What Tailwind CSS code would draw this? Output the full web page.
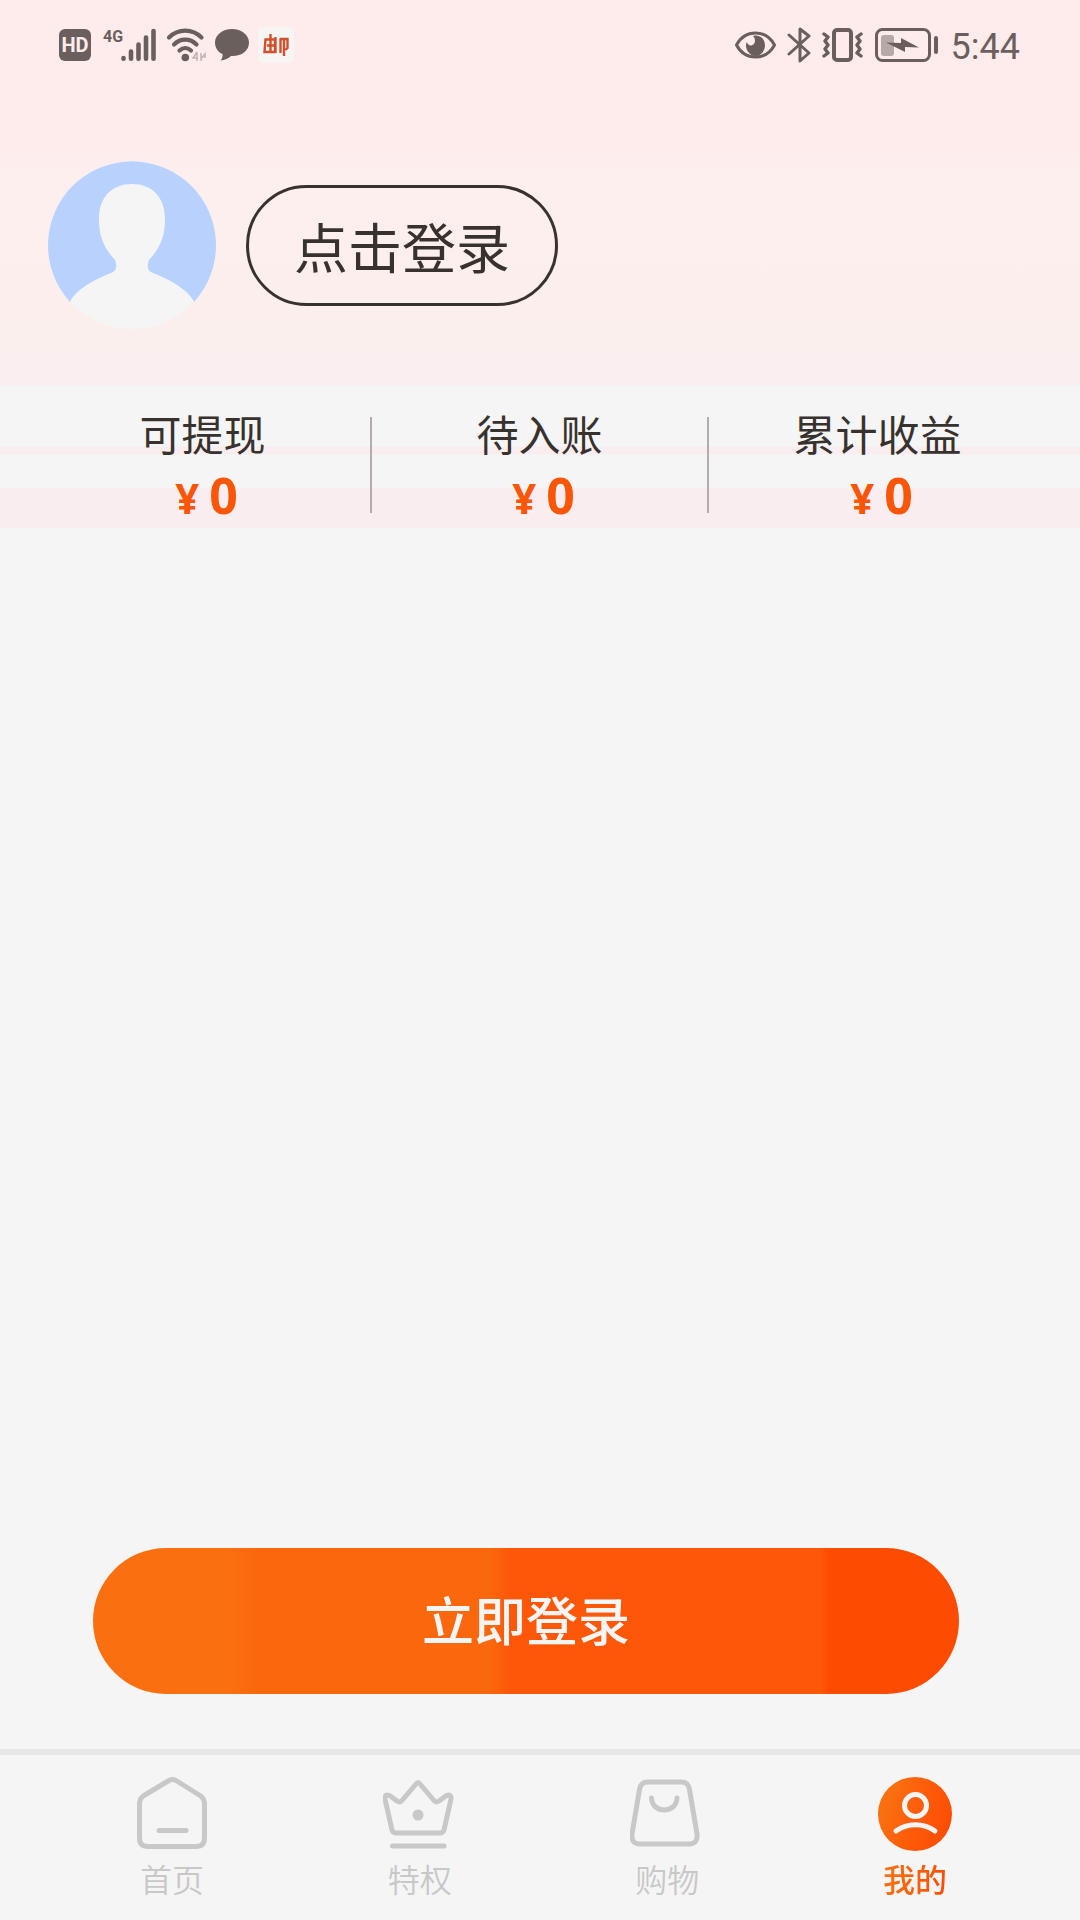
<!DOCTYPE html>
<html lang="zh-CN">
  <head>
    <meta charset="UTF-8" />
    <meta name="viewport" content="width=device-width, initial-scale=1.0" />
    <title>我的</title>
    <script src="https://cdn.jsdelivr.net/npm/@tailwindcss/browser@4"></script>
  </head>

  <body class="min-h-screen flex flex-col bg-[#f5f5f5] text-[#38322e] font-['Noto_Sans_CJK_SC',sans-serif]">
    <!-- 顶部：渐变背景 -->
    <div class="h-[528px] bg-[linear-gradient(to_bottom,#feecec_0px,#feecec_145px,#fcefed_175px,#fbefed_352px,#faeef0_354px,#faeef0_385px,#f5f5f5_386px,#f5f5f5_446px,#faedef_447px,#faedef_454px,#f5f5f5_455px,#f5f5f5_488px,#faedef_489px,#faedef_527px,#f5f5f5_528px)]">
      <!-- 状态栏 -->
      <div class="flex items-center justify-between h-[90px] pl-[59px] pr-[60px] text-[#6b5f5e]">
        <div class="flex items-center">
          <span class="w-8 h-8 rounded-md bg-[#6b5f5e] text-[#feecec] font-['Roboto',sans-serif] text-[20px] leading-8 font-bold text-center">HD</span>
          <span class="ml-3 mb-4 w-[18px] font-['Roboto',sans-serif] text-[16px] leading-4 font-bold">4G</span>
          <svg class="w-9 h-[34px]" viewBox="0 0 36 34" fill="none" stroke="currentColor" stroke-width="4.6" stroke-linecap="round">
            <path d="M2.5 30v.8M10 23.500v7.300M17.500 16.500v14.300M25 9.500v21.300M32.500 3v27.800" />
          </svg>
          <svg class="ml-[9px] w-10 h-[34px]" viewBox="0 0 40 34" fill="none">
            <g stroke="currentColor" stroke-width="4.200" stroke-linecap="round">
              <path d="M3 9.500C12 .3 26.500 .3 35.500 9.500" />
              <path d="M8 16.500C14.500 10 24 10 30.500 16.500" />
              <path d="M13.500 22.500C17 19.300 21.500 19.300 25 22.500" />
            </g>
            <circle cx="19.300" cy="29.500" r="3.800" fill="currentColor" />
            <path d="M31 24v9M31 24l-4 6h5M35 25v8M35 31l4-5v4" stroke="#c2b5b4" stroke-width="1.500" />
          </svg>
          <svg class="ml-[9px] w-[34px] h-[34px]" viewBox="0 0 34 34" fill="currentColor">
            <path d="M17 1C7.500 1 0 7 0 14.500c0 5.500 3 9.500 7.500 11.500.3 2.500-.5 5-2 6.500 4.500-.3 8-2 10.500-4.500C26.500 28.500 34 23 34 14.500 34 7 26.500 1 17 1z" />
          </svg>
          <svg class="ml-[9px] w-9 h-9" viewBox="0 0 36 36" fill="none">
            <rect width="36" height="36" rx="5" fill="#f6f5f4" />
            <path d="M7.500 12.500h9.500v12.500H6.500zM12.500 7v18M9 18.500h7M17.500 10v16M22.500 12v14M21.500 12h8v9l-2 2M26 12V29" stroke="#d0502c" stroke-width="2.400" />
          </svg>
        </div>
        <div class="flex items-center">
          <svg class="w-[41px] h-7" viewBox="0 0 41 28">
            <path d="M1.500 14C10-2 31-2 39.500 14 31 30 10 30 1.500 14z" fill="none" stroke="currentColor" stroke-width="3" stroke-linejoin="round" />
            <path d="M18 5c7-2 12 3 12 9.500 0 5.500-4.500 10.500-9.500 10.500S11 20 11 14.500c0-1 .2-2.300.8-3.500 1 3 3.200 4 5.200 3.200 3.500-1.500 4-6 1-9.200z" fill="currentColor" />
          </svg>
          <svg class="ml-[11px] w-6 h-9" viewBox="0 0 24 36" fill="none" stroke="currentColor" stroke-width="3" stroke-linecap="round" stroke-linejoin="round">
            <path d="M2 8l20 18-9 8V2l9 7L2 27" />
          </svg>
          <svg class="ml-[11px] w-[41px] h-[34px]" viewBox="0 0 41 34" fill="none" stroke="currentColor" stroke-linejoin="round">
            <rect x="12" y="2" width="17" height="30" rx="3" stroke-width="4" />
            <path d="M2 6l4 3-3 4 3 4-3 4 3 4-4 3M39 6l-4 3 3 4-3 4 3 4-3 4 4 3" stroke-width="3.400" stroke-linecap="round" />
          </svg>
          <svg class="ml-3 w-[64px] h-[34px]" viewBox="0 0 64 34">
            <rect x="1.500" y="1.500" width="53" height="31" rx="6" fill="none" stroke="currentColor" stroke-width="3" />
            <rect x="6" y="7" width="13" height="21" rx="3" fill="#b5aaa7" />
            <path d="M11 14.500l15 .5V10l18 9.500-14-.5v5z" fill="currentColor" />
            <rect x="59" y="8" width="4" height="18" rx="2" fill="currentColor" />
          </svg>
          <time class="ml-3 mt-1 font-['Roboto',sans-serif] text-[36px] leading-10">5:44</time>
        </div>
      </div>

      <!-- 用户 -->
      <div class="flex items-center gap-[30px] mt-[71px] pl-12">
        <svg class="w-[168px] h-[168px]" viewBox="0 0 168 168">
          <circle cx="84" cy="84" r="84" fill="#f5f5f5" />
          <path d="M22 141A84 84 0 1 1 146 141C141 129 121 118 105 112 99 110 99 104 101 99 112 87 117 76 117 58 117 36 104 23 84 23S51 36 51 58C51 76 56 87 67 99 69 104 69 110 63 112 47 118 27 129 22 141z" fill="#b9d2fd" />
        </svg>
        <button class="h-[121px] px-[45px] pt-[2px] rounded-full border-3 border-[#38322e] text-[54px] leading-[60px]">点击登录</button>
      </div>

      <!-- 收益 -->
      <div class="grid grid-cols-3 mt-[88px] pl-[35px] pr-[34px] divide-x-2 divide-[#b5aba9] text-center">
        <div class="h-24">
          <p class="text-[42px] leading-8">可提现</p>
          <p class="mt-4 ml-2 font-['Noto_Sans','Noto_Sans_CJK_SC',sans-serif] text-[50px] leading-[60px] font-bold text-[#fb5607]"><span class="mr-[10px] text-[42px]">¥</span>0</p>
        </div>
        <div class="h-24">
          <p class="text-[42px] leading-8">待入账</p>
          <p class="mt-4 ml-2 font-['Noto_Sans','Noto_Sans_CJK_SC',sans-serif] text-[50px] leading-[60px] font-bold text-[#fb5607]"><span class="mr-[10px] text-[42px]">¥</span>0</p>
        </div>
        <div class="h-24">
          <p class="text-[42px] leading-8">累计收益</p>
          <p class="mt-4 ml-2 font-['Noto_Sans','Noto_Sans_CJK_SC',sans-serif] text-[50px] leading-[60px] font-bold text-[#fb5607]"><span class="mr-[10px] text-[42px]">¥</span>0</p>
        </div>
      </div>
    </div>

    <!-- 登录按钮 -->
    <div class="mt-auto pl-[93px] pr-[121px] pb-[55px]">
      <button class="w-full h-[146px] pb-1 rounded-full text-[52px] font-medium text-[#f5f5f5] bg-[linear-gradient(to_right,#fa7011_0%,#fa7011_16%,#fb670d_19%,#fb670d_46%,#fe5708_48%,#fe5708_84%,#fd4c01_85%,#fd4c01_100%)]">立即登录</button>
    </div>

    <!-- 底部导航 -->
    <nav class="flex justify-between h-[171px] pt-[22px] pl-[135px] pr-[128px] border-t-6 border-[#e7e7e7] text-[32px] leading-9 font-[350] text-[#c8c8c8]">
      <a href="#" class="flex flex-col items-center gap-[9px]">
        <svg class="w-[74px] h-[74px]" viewBox="0 0 74 74" fill="none" stroke="currentColor" stroke-width="5" stroke-linecap="round" stroke-linejoin="round">
          <path d="M34 3.500Q37.500 1.500 41 3.500L65 18.500Q69.500 21.500 69.500 27V61Q69.500 69.500 61 69.500H13Q4.500 69.500 4.500 61V27Q4.500 21.500 9 18.500z" />
          <path d="M24 53.500H51" />
        </svg>
        首页
      </a>
      <a href="#" class="flex flex-col items-center gap-[9px]">
        <svg class="w-[74px] h-[74px]" viewBox="2 0 74 74" fill="none" stroke="currentColor" stroke-width="5" stroke-linecap="round" stroke-linejoin="round">
          <path d="M35 7Q37 4.500 39 7L53 23.500Q55 26 58 24L65.500 18.500Q70.500 16.500 70 22L63 53Q62 56 59 56H15Q12 56 11 53L4 22Q3.500 16.500 8.500 18.500L16 24Q19 26 21 23.500z" />
          <circle cx="37" cy="38" r="5.500" fill="currentColor" stroke="none" />
          <path d="M11.500 69H63" />
        </svg>
        特权
      </a>
      <a href="#" class="flex flex-col items-center gap-[9px]">
        <svg class="w-[74px] h-[74px]" viewBox="3 0 74 74" fill="none" stroke="currentColor" stroke-width="5" stroke-linecap="round" stroke-linejoin="round">
          <path d="M21 5H54Q61.500 5 62.500 12.500L70 57Q71 67 62 67H13Q4 67 5 57L12.500 12.500Q13.500 5 21 5z" />
          <path d="M24.500 21C25 37 49.500 37 50 21" />
        </svg>
        购物
      </a>
      <a href="#" class="flex flex-col items-center gap-[9px] font-medium">
        <svg class="w-[74px] h-[74px]" viewBox="0 0 74 74" fill="none">
          <defs>
            <linearGradient id="mine" x1="0" y1="0.3" x2="1" y2="0.7">
              <stop offset="0.1" stop-color="#fa7011" />
              <stop offset="0.55" stop-color="#fe5b09" />
              <stop offset="1" stop-color="#fd4c01" />
            </linearGradient>
          </defs>
          <circle cx="37" cy="37" r="37" fill="url(#mine)" />
          <circle cx="37.500" cy="28.500" r="11" stroke="#f5f5f5" stroke-width="5" />
          <path d="M18 54C29 45.500 46 45.500 57 54" stroke="#f5f5f5" stroke-width="5" stroke-linecap="round" />
        </svg>
        <span class="bg-linear-to-r from-[#fa7011] to-[#fd4c01] bg-clip-text text-transparent">我的</span>
      </a>
    </nav>
  </body>
</html>
